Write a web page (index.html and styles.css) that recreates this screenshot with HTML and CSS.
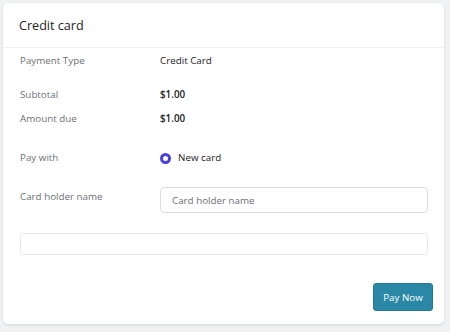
FILE: index.html
```html
<!DOCTYPE html>
<html lang="en">
<head>
<meta charset="UTF-8">
<meta name="viewport" content="width=device-width, initial-scale=1.0">
<title>Credit card</title>
<link rel="stylesheet" href="styles.css">
</head>
<body>

<div class="card">
  <div class="card-header">
    <h2>Credit card</h2>
  </div>

  <div class="card-body">
    <div class="row">
      <span class="label">Payment Type</span>
      <span class="value">Credit Card</span>
    </div>

    <div class="row row-subtotal">
      <span class="label">Subtotal</span>
      <span class="value bold">$1.00</span>
    </div>
    <div class="row row-due">
      <span class="label">Amount due</span>
      <span class="value bold">$1.00</span>
    </div>

    <div class="row row-pay">
      <span class="label">Pay with</span>
      <label class="radio">
        <input type="radio" name="payWith" checked>
        <span class="dot"></span>
        New card
      </label>
    </div>

    <div class="row row-holder">
      <label class="label" for="holder">Card holder name</label>
      <input type="text" id="holder" class="field" placeholder="Card holder name">
    </div>

    <div class="card-element"></div>

    <div class="actions">
      <button type="submit" class="pay-btn">Pay Now</button>
    </div>
  </div>
</div>

</body>
</html>
```

FILE: styles.css
```css
body {
  font-family: "Open Sans", sans-serif;
  background-color: #f1f2f4;
  margin: 0;
  padding: 3px 6px 8px 3px;
}
.card {
  background-color: #fff;
  border-radius: 5px;
  box-shadow: 0 1px 3px rgba(0, 0, 0, 0.12);
  height: 321px;
  box-sizing: border-box;
}
.card-header {
  height: 44px;
  border-bottom: 1px solid #eef0f2;
  padding: 0 16px;
  display: flex;
  align-items: center;
}
.card-header h2 {
  margin: 0;
  font-size: 12.6px;
  font-weight: normal;
  color: #222;
}
.card-body {
  padding: 5px 16px 0 17px;
}
.row {
  display: flex;
  align-items: center;
  font-size: 9.8px;
  line-height: 16px;
}
.label {
  width: 140px;
  color: #6c6f75;
}
.value {
  color: #222;
}
.bold {
  font-weight: 600;
}
.row-subtotal {
  margin-top: 18px;
}
.row-due {
  margin-top: 8px;
}
.row-pay {
  margin-top: 23px;
}
.radio {
  display: flex;
  align-items: center;
  color: #222;
}
.radio input {
  display: none;
}
.dot {
  width: 5px;
  height: 5px;
  border: 3px solid #4a3fe0;
  border-radius: 50%;
  margin-right: 7px;
}
.row-holder {
  margin-top: 21px;
  align-items: flex-start;
}
.row-holder .label {
  padding-top: 2px;
}
.field {
  flex: 1;
  height: 26px;
  padding: 0 11px;
  border: 1px solid #d9dce0;
  border-radius: 4px;
  box-sizing: border-box;
  font-family: "Open Sans", sans-serif;
  font-size: 9.8px;
}
.field::placeholder {
  color: #6c6f75;
}
.card-element {
  margin-top: 20px;
  height: 22px;
  border: 1px solid #e6e8eb;
  border-radius: 4px;
  box-sizing: border-box;
}
.actions {
  display: flex;
  justify-content: flex-end;
  margin-top: 28px;
  margin-right: -5px;
}
.pay-btn {
  background-color: #2a88a6;
  color: #fff;
  border: 1px solid #22799a;
  border-radius: 3px;
  height: 28px;
  width: 60px;
  padding: 0;
  font-family: "Open Sans", sans-serif;
  font-size: 9.8px;
  cursor: pointer;
}
.pay-btn:hover {
  background-color: #237896;
}
```
